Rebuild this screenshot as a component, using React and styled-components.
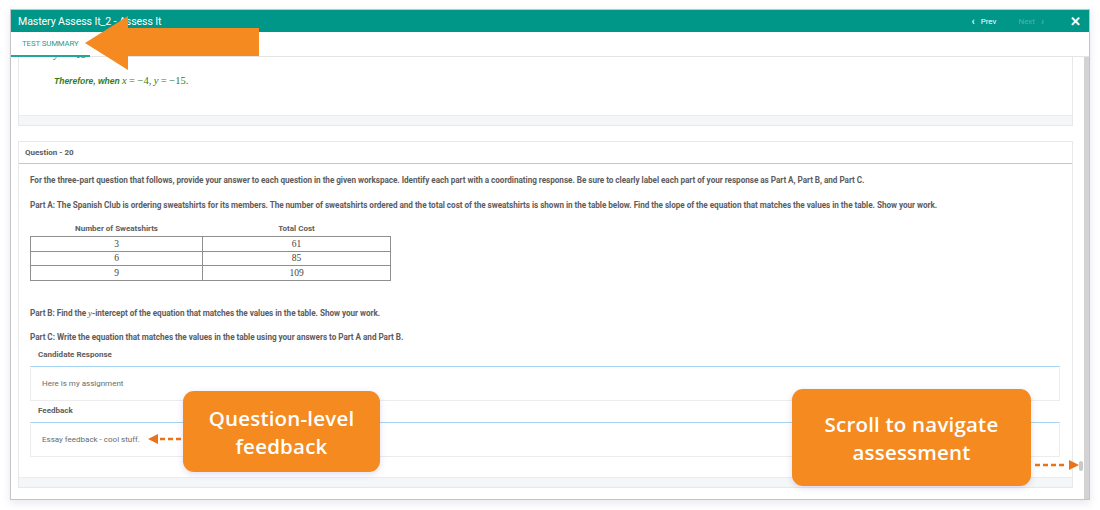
import React from "react";
import styled, { createGlobalStyle } from "styled-components";

const GlobalStyle = createGlobalStyle`
  html, body {
    margin: 0;
    padding: 0;
    background: #ffffff;
    overflow: hidden;
  }
  body {
    font-family: Roboto, "Liberation Sans", Arial, sans-serif;
  }
`;

const Page = styled.div`
  position: relative;
  width: 1100px;
  height: 510px;
  padding: 9px 10px 10px 10px;
  box-sizing: border-box;
`;

const Modal = styled.div`
  width: 1080px;
  height: 491px;
  box-sizing: border-box;
  border: 1px solid #c4c4c8;
  box-shadow: 0 3px 8px rgba(120, 120, 170, 0.18);
  display: flex;
  flex-direction: column;
  background: #fff;
`;

const Header = styled.div`
  height: 22px;
  background: #009688;
  display: flex;
  align-items: center;
  padding: 0 8px 0 7px;
  color: #fff;
`;

const Title = styled.div`
  font-size: 10.6px;
  letter-spacing: -0.1px;
  flex: 1;
`;

const NavButton = styled.span`
  font-size: 8px;
  color: ${(p) => (p.$disabled ? "#4bb5aa" : "#ffffff")};
  display: inline-flex;
  align-items: center;
  gap: 6px;
  margin-right: ${(p) => p.$gap || 0}px;
`;

const Close = styled.span`
  font-size: 13px;
  font-weight: 700;
  line-height: 1;
`;

const Tabs = styled.div`
  height: 24px;
  border-bottom: 1px solid #e4e4e4;
  display: flex;
  align-items: stretch;
`;

const Tab = styled.div`
  font-size: 7.8px;
  color: ${(p) => (p.$active ? "#1f9e94" : "#8a8a8a")};
  padding: 0 ${(p) => p.$pad || 11}px;
  display: flex;
  align-items: center;
  border-bottom: 2px solid ${(p) => (p.$active ? "#22a59a" : "transparent")};
  margin-bottom: -1px;
  letter-spacing: -0.1px;
`;

const Body = styled.div`
  flex: 1;
  display: flex;
  overflow: hidden;
  min-height: 0;
`;

const Scroll = styled.div`
  flex: 1;
  overflow: hidden;
  padding: 0 11px 0 7px;
`;

const ScrollInner = styled.div`
  margin-top: -11px;
  display: flex;
  flex-direction: column;
  gap: 15px;
`;

const Track = styled.div`
  width: 5px;
  background: #d3d3d3;
  position: relative;
`;

const Thumb = styled.div`
  position: absolute;
  left: -5px;
  top: 404px;
  width: 4px;
  height: 10px;
  border-radius: 2px;
  background: #c9c9c9;
`;

const Panel = styled.div`
  border: 1px solid #e8e8e8;
  background: #fff;
`;

const PanelFooter = styled.div`
  height: 9px;
  background: #f5f6f8;
  border-top: 1px solid #ececec;
`;

const PanelHead = styled.div`
  height: 21px;
  padding: 0 6px;
  display: flex;
  align-items: center;
  font-size: 8px;
  font-weight: 700;
  color: #5b5b5b;
  border-bottom: 1.5px solid #9fd1f1;
`;

const MathBlock = styled.div`
  padding: 2px 0 28px 35px;
  display: flex;
  flex-direction: column;
  gap: 14px;
`;

const MathLine = styled.div`
  height: 12px;
  line-height: 12px;
  font-size: 8.5px;
  font-weight: 700;
  font-style: italic;
  color: #2f7d1d;
  font-family: "Liberation Sans", Arial, sans-serif;
`;

const Mv = styled.span`
  font-family: "Liberation Serif", "Times New Roman", serif;
  font-weight: 400;
  font-size: 10.5px;
  font-style: ${(p) => (p.$up ? "normal" : "italic")};
`;

const QBody = styled.div`
  padding: 10px 12px 20px 11px;
`;

const Para = styled.p`
  margin: 0 0 ${(p) => p.$mb || 13}px 0;
  font-size: 8.2px;
  line-height: 12px;
  font-weight: 700;
  color: #5d5d5d;
  letter-spacing: -0.05px;
`;

const Table = styled.table`
  border-collapse: collapse;
  width: 361px;
  margin: 0 0 26px 0;
  table-layout: fixed;
`;

const Th = styled.th`
  font-size: 8px;
  font-weight: 700;
  color: #5d5d5d;
  height: 15px;
  padding: 0;
  text-align: center;
  width: ${(p) => p.$w || "auto"};
`;

const Td = styled.td`
  border: 1.5px solid #8f8f8f;
  height: 13.5px;
  padding: 0;
  text-align: center;
  font-family: "Liberation Serif", "Times New Roman", serif;
  font-size: 9.5px;
  color: #444;
`;

const Label = styled.div`
  font-size: 8px;
  font-weight: 700;
  color: #5d5d5d;
  padding: 0 8px;
  height: 13px;
  line-height: 13px;
  margin-bottom: ${(p) => p.$mb || 0}px;
`;

const AnswerBox = styled.div`
  height: 33px;
  border: 1px solid #ececec;
  border-top: 1.5px solid #a5d3f2;
  display: flex;
  align-items: center;
  padding: 0 11px;
  font-size: 8px;
  color: #6a6a6a;
  margin-bottom: ${(p) => p.$mb || 0}px;
`;

const Callout = styled.div`
  position: absolute;
  left: ${(p) => p.$x}px;
  top: ${(p) => p.$y}px;
  width: ${(p) => p.$w}px;
  height: ${(p) => p.$h}px;
  background: #f58a20;
  border-radius: 11px;
  box-shadow: 0 2px 6px rgba(110, 100, 190, 0.22);
  display: flex;
  align-items: center;
  justify-content: center;
  text-align: center;
  color: #fff;
  font-family: "Open Sans", Lato, sans-serif;
  font-weight: 600;
  font-size: 20.5px;
  line-height: 28px;
  letter-spacing: 0.2px;
`;

const Overlay = styled.svg`
  position: absolute;
  left: ${(p) => p.$x}px;
  top: ${(p) => p.$y}px;
  overflow: visible;
`;

const BigArrow = () => (
  <Overlay $x={84} $y={14} width="176" height="58" viewBox="0 0 176 58">
    <polygon
      points="1,29 44,2 44,14 175,14 175,42 44,42 44,56"
      fill="#f58a20"
    />
  </Overlay>
);

const DashArrow = ({ x, y, w, dir }) => (
  <Overlay $x={x} $y={y - 6} width={w} height="12" viewBox={`0 0 ${w} 12`}>
    {dir === "left" ? (
      <>
        <polygon points="0,6 10,1 10,11" fill="#ea7318" />
        <line x1="12" y1="6" x2={w} y2="6" stroke="#ea7318" strokeWidth="2.5" strokeDasharray="5 3" />
      </>
    ) : (
      <>
        <line x1="0" y1="6" x2={w - 12} y2="6" stroke="#ea7318" strokeWidth="2.5" strokeDasharray="5 3" />
        <polygon points={`${w},6 ${w - 10},1 ${w - 10},11`} fill="#ea7318" />
      </>
    )}
  </Overlay>
);

const rows = [
  ["3", "61"],
  ["6", "85"],
  ["9", "109"],
];

export default function App() {
  return (
    <Page>
      <GlobalStyle />
      <Modal>
        <Header>
          <Title>Mastery Assess It_2 - Assess It</Title>
          <NavButton $gap={22}>
            <span style={{ fontSize: 10, fontWeight: 700 }}>‹</span>Prev
          </NavButton>
          <NavButton $disabled $gap={26}>
            Next<span style={{ fontSize: 10, fontWeight: 700 }}>›</span>
          </NavButton>
          <Close>✕</Close>
        </Header>
        <Tabs>
          <Tab $active>TEST SUMMARY</Tab>
          <Tab $pad={30}>SCORING</Tab>
          <Tab $pad={20}>NOTES</Tab>
        </Tabs>
        <Body>
          <Scroll>
            <ScrollInner>
              <Panel>
                <MathBlock>
                  <MathLine>
                    <Mv>y</Mv> <Mv $up>= −15</Mv>
                  </MathLine>
                  <MathLine>
                    Therefore, when <Mv>x</Mv> <Mv $up>= −4,</Mv> <Mv>y</Mv>{" "}
                    <Mv $up>= −15.</Mv>
                  </MathLine>
                </MathBlock>
                <PanelFooter />
              </Panel>
              <Panel>
                <PanelHead>Question - 20</PanelHead>
                <QBody>
                  <Para>
                    For the three-part question that follows, provide your answer to each question in the
                    given workspace. Identify each part with a coordinating response. Be sure to clearly label
                    each part of your response as Part A, Part B, and Part C.
                  </Para>
                  <Para $mb={10}>
                    Part A: The Spanish Club is ordering sweatshirts for its members. The number of sweatshirts
                    ordered and the total cost of the sweatshirts is shown in the table below. Find the slope of
                    the equation that matches the values in the table. Show your work.
                  </Para>
                  <Table>
                    <thead>
                      <tr>
                        <Th $w="172px">Number of Sweatshirts</Th>
                        <Th>Total Cost</Th>
                      </tr>
                    </thead>
                    <tbody>
                      {rows.map(([a, b]) => (
                        <tr key={a}>
                          <Td>{a}</Td>
                          <Td>{b}</Td>
                        </tr>
                      ))}
                    </tbody>
                  </Table>
                  <Para $mb={12}>
                    Part B: Find the <Mv style={{ fontSize: 9 }}>y</Mv>-intercept of the equation that matches
                    the values in the table. Show your work.
                  </Para>
                  <Para $mb={5}>
                    Part C: Write the equation that matches the values in the table using your answers to Part A
                    and Part B.
                  </Para>
                  <Label $mb={5}>Candidate Response</Label>
                  <AnswerBox $mb={3}>Here is my assignment</AnswerBox>
                  <Label $mb={5}>Feedback</Label>
                  <AnswerBox>Essay feedback - cool stuff.</AnswerBox>
                </QBody>
                <PanelFooter />
              </Panel>
            </ScrollInner>
          </Scroll>
          <Track>
            <Thumb />
          </Track>
        </Body>
      </Modal>

      <BigArrow />
      <DashArrow x={148} y={439} w={34} dir="left" />
      <DashArrow x={1035} y={465} w={44} dir="right" />
      <Callout $x={183} $y={391} $w={197} $h={81}>
        Question-level
        <br />
        feedback
      </Callout>
      <Callout $x={792} $y={389} $w={239} $h={97}>
        Scroll to navigate
        <br />
        assessment
      </Callout>
    </Page>
  );
}
